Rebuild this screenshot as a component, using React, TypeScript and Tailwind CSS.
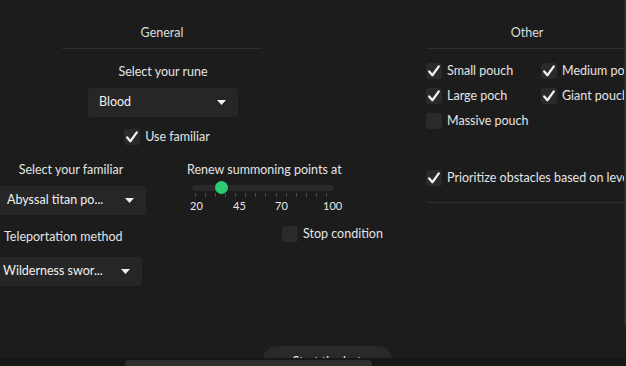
import React from "react";

function Check() {
  return (
    <svg width="16" height="16" viewBox="0 0 16 16" className="block">
      <path d="M3.2 8.4 L6.4 12.2 L12.8 3.4" fill="none" stroke="#f2f2f2" strokeWidth="2.3" strokeLinecap="round" strokeLinejoin="round" />
    </svg>
  );
}

function CheckBox({ checked, label }: { checked: boolean; label: string }) {
  return (
    <div className="flex items-center gap-[5px] h-[16px] whitespace-nowrap">
      <div className="w-[16px] h-[16px] rounded-[3px] bg-[#2a2a2a] shrink-0">{checked && <Check />}</div>
      <span className="leading-[16px]">{label}</span>
    </div>
  );
}

function Caret() {
  return (
    <svg width="9" height="5" viewBox="0 0 9 5" className="block">
      <path d="M0 0 L9 0 L4.5 5 Z" fill="#f0f0f0" />
    </svg>
  );
}

function Dropdown({ text, className }: { text: string; className?: string }) {
  return (
    <div className={"w-[150px] h-[29px] rounded-[3px] bg-[#262626] flex items-center justify-between pl-[11px] pr-[12px] shrink-0 " + (className ?? "")}>
      <span className="text-[#f0f0f0] whitespace-nowrap">{text}</span>
      <Caret />
    </div>
  );
}

function Header({ text }: { text: string }) {
  return (
    <div className="w-[200px] flex flex-col items-center pt-[23px]">
      <div className="leading-[20px] text-[12.5px] text-[#dcdcdc]">{text}</div>
      <div className="w-full h-px bg-[#2e2e2e] mt-[5px]" />
    </div>
  );
}

export default function App() {
  const ticks = Array.from({ length: 14 }, (_, i) => i);
  return (
    <div className="w-[626px] h-[366px] bg-[#1c1c1c] overflow-hidden flex flex-col font-['Lato',sans-serif] text-[12.5px] text-[#e4e4e4]">
      <div className="h-[358px] flex min-h-0">
        <div className="flex-1 min-w-0 overflow-hidden flex flex-col">
          <div className="flex shrink-0">
            {/* General column */}
            <div className="w-[390px] shrink-0 flex flex-col">
              <div className="ml-[62px]">
                <Header text="General" />
              </div>
              <div className="w-[326px] flex flex-col items-center">
                <div className="mt-[14px] leading-[18px]">Select your rune</div>
                <Dropdown text="Blood" className="mt-[7px]" />
                <div className="mt-[12px] ml-[8px]">
                  <CheckBox checked label="Use familiar" />
                </div>
              </div>
              <div className="flex mt-[16px]">
                <div className="w-[150px] ml-[-4px] flex flex-col items-center shrink-0">
                  <div className="leading-[18px]">Select your familiar</div>
                  <Dropdown text="Abyssal titan po..." className="mt-[7px]" />
                  <div className="leading-[18px] mt-[13px] self-start ml-[8px]">Teleportation method</div>
                  <Dropdown text="Wilderness swor..." className="mt-[11px] ml-[-8px] pl-[11px]" />
                </div>
                <div className="ml-[41px] flex flex-col">
                  <div className="leading-[18px] whitespace-nowrap">Renew summoning points at</div>
                  <div className="ml-[5px] w-[142px] h-[13px] mt-[2px] flex items-center">
                    <div className="w-full h-[6px] rounded-full bg-[#2a2a2a] flex items-center">
                      <div className="ml-[23px] w-[13px] h-[13px] rounded-full bg-[#2ecc71]" />
                    </div>
                  </div>
                  <div className="ml-[8px] w-[132px] flex justify-between mt-[-1px]">
                    {ticks.map((t) => (
                      <div key={t} className="w-px h-[4px] bg-[#4a4a4a]" />
                    ))}
                  </div>
                  <div className="relative h-[14px] mt-[2px] text-[11px] leading-[14px] text-[#e8e8e8]">
                    <span className="absolute left-[3px]">20</span>
                    <span className="absolute left-[46px]">45</span>
                    <span className="absolute left-[88px]">70</span>
                    <span className="absolute left-[136px]">100</span>
                  </div>
                  <div className="mt-[13px] ml-[95px]">
                    <CheckBox checked={false} label="Stop condition" />
                  </div>
                </div>
              </div>
            </div>
            {/* Other column */}
            <div className="ml-[37px] w-[200px] shrink-0 flex flex-col">
              <Header text="Other" />
              <div className="mt-[14px] grid grid-cols-[115px_115px] gap-y-[9px] ml-[-1px]">
                <CheckBox checked label="Small pouch" />
                <CheckBox checked label="Medium pouch" />
                <CheckBox checked label="Large poch" />
                <CheckBox checked label="Giant pouch" />
                <CheckBox checked={false} label="Massive pouch" />
              </div>
              <div className="mt-[41px] ml-[-1px]">
                <CheckBox checked label="Prioritize obstacles based on level" />
              </div>
              <div className="w-full h-px bg-[#2e2e2e] mt-[16px]" />
            </div>
          </div>
          <div className="flex justify-center mt-auto ml-[30px]">
            <div className="w-[129px] h-[28px] rounded-full bg-[#292929] flex items-start justify-center pt-[7px] mb-[-16px] shrink-0">
              <span className="text-[#f0f0f0] leading-[18px]">Start the bot</span>
            </div>
          </div>
        </div>
        <div className="w-[2px] shrink-0 flex flex-col">
          <div className="h-[325px] bg-[#2a2a2a]" />
        </div>
      </div>
      <div className="h-[8px] bg-[#171717] flex items-end shrink-0">
        <div className="ml-[125px] w-[247px] h-[6px] rounded-t-[4px] bg-[#2e2e2e]" />
      </div>
    </div>
  );
}
